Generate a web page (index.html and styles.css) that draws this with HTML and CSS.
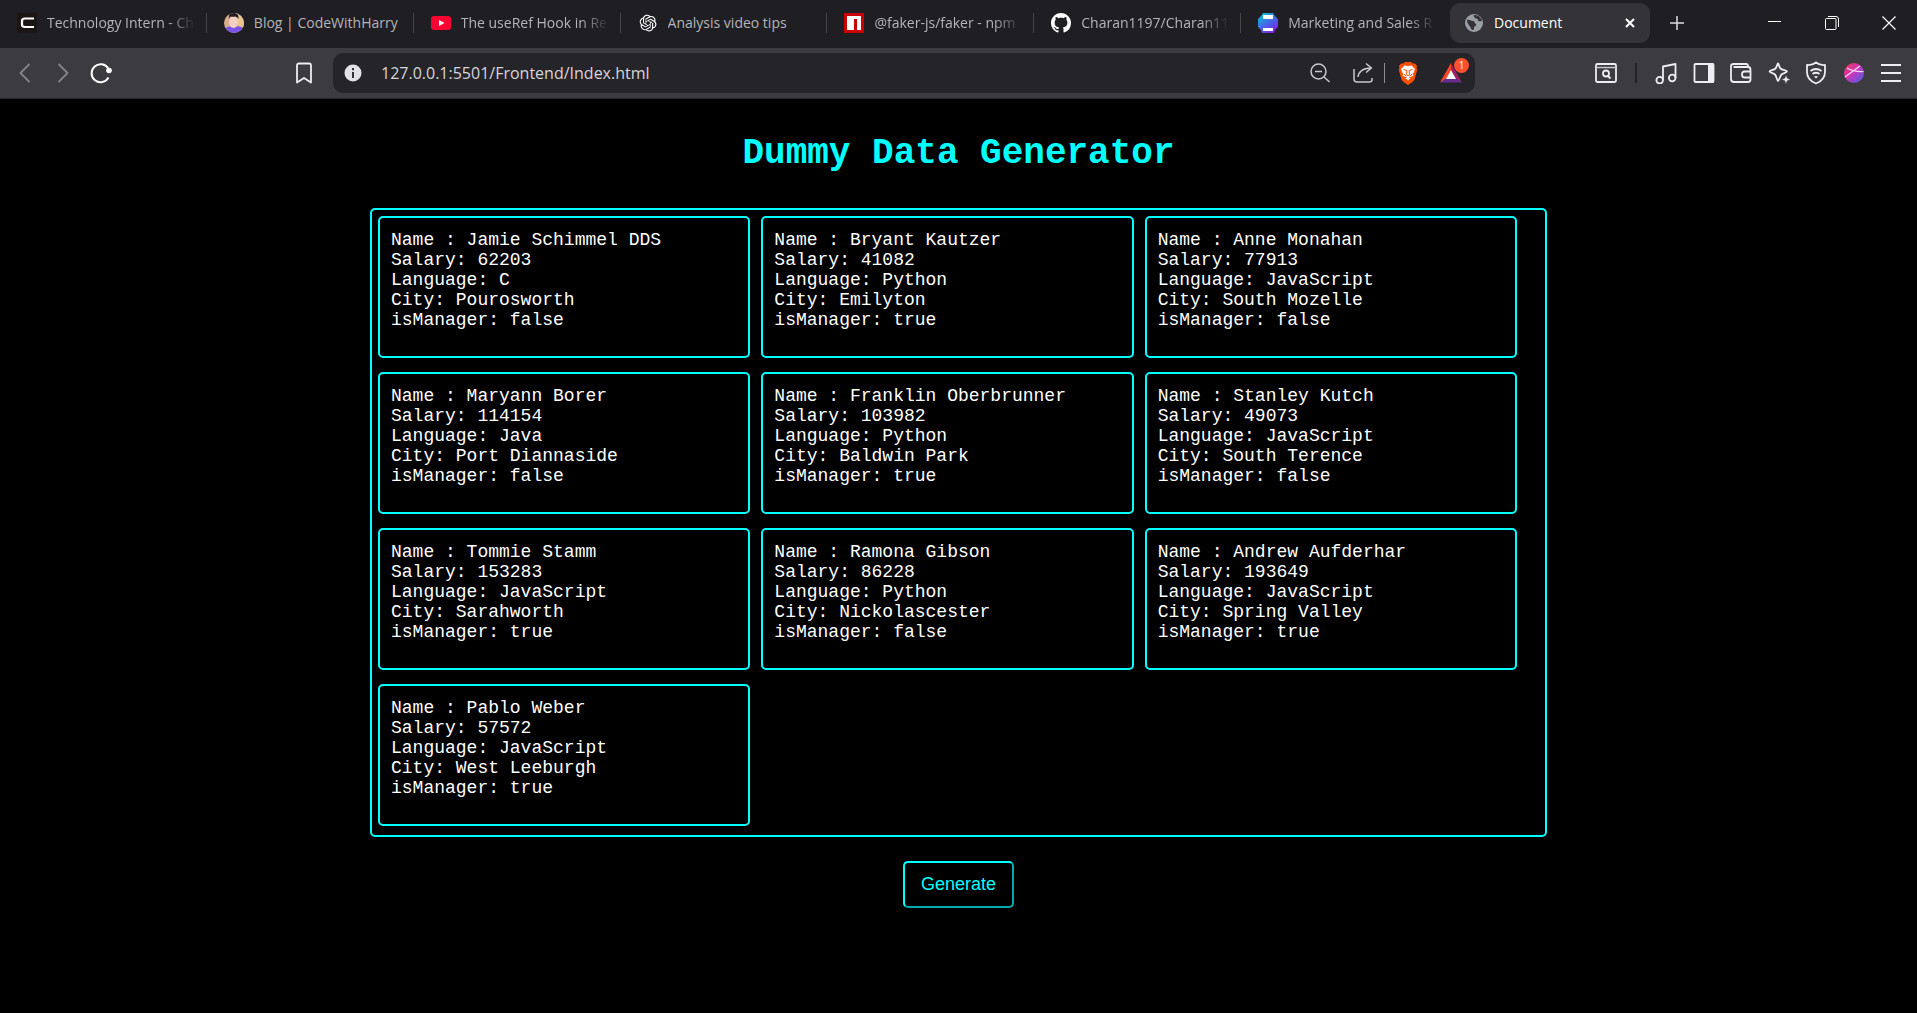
FILE: index.html
```html
<!DOCTYPE html>
<html lang="en">
<head>
<meta charset="utf-8">
<title>Document</title>
<link rel="stylesheet" href="styles.css">
</head>
<body>
<header class="browser">
  <div class="tabstrip">
    <nav class="tabs" aria-label="Tabs">
      <a class="tab" href="#"><svg class="fav" viewBox="0 0 20 20"><rect width="20" height="20" fill="#1b1514"/><path d="M17 5.500H8Q5 5.500 5 8v3.500Q5 14 8 14h9" fill="none" stroke="#fff" stroke-width="2.200"/></svg><span class="tab-title fade">Technology Intern - Ch</span></a>
      <a class="tab" href="#"><svg class="fav" viewBox="0 0 20 20"><defs><clipPath id="av"><circle cx="10" cy="10" r="10"/></clipPath></defs><g clip-path="url(#av)"><rect width="20" height="20" fill="#d9ad8d"/><path d="M12 0h8v14h-6z" fill="#e9c58f"/><path d="M0 20v-4q5-4 10-2 6-2 9 1v5z" fill="#7b55e8"/><ellipse cx="9.500" cy="9" rx="4.500" ry="6" fill="#f2cfc0"/><path d="M5 6Q4-1 10 0q5 0 4.500 6-1-2-3-2.500Q8 4 6.500 3.500 5.500 4 5 6z" fill="#241a20"/></g></svg><span class="tab-title">Blog | CodeWithHarry</span></a>
      <a class="tab" href="#"><svg class="fav" viewBox="0 0 20 20"><rect y="3" width="20" height="14" rx="3" fill="#ff0033"/><path d="M8 7l5.500 3L8 13z" fill="#fff"/></svg><span class="tab-title fade">The useRef Hook in Re</span></a>
      <a class="tab" href="#"><svg class="fav" viewBox="0 0 24 24"><path transform="translate(2 2) scale(.84)" fill="#fff" d="M22.282 9.821a5.985 5.985 0 0 0-.516-4.910 6.046 6.046 0 0 0-6.510-2.900A6.065 6.065 0 0 0 4.981 4.182a5.985 5.985 0 0 0-3.998 2.900 6.046 6.046 0 0 0 .743 7.097 5.980 5.980 0 0 0 .510 4.911 6.051 6.051 0 0 0 6.515 2.900A5.985 5.985 0 0 0 13.260 24a6.056 6.056 0 0 0 5.772-4.206 5.990 5.990 0 0 0 3.998-2.900 6.056 6.056 0 0 0-.748-7.073zM13.260 22.430a4.476 4.476 0 0 1-2.876-1.040l.141-.081 4.779-2.758a.795.795 0 0 0 .393-.681v-6.737l2.020 1.169a.071.071 0 0 1 .038.052v5.583a4.504 4.504 0 0 1-4.495 4.493zM3.600 18.304a4.471 4.471 0 0 1-.535-3.014l.142.085 4.783 2.759a.771.771 0 0 0 .781 0l5.843-3.369v2.332a.080.080 0 0 1-.033.062L9.740 19.950a4.500 4.500 0 0 1-6.140-1.646zM2.341 7.896a4.485 4.485 0 0 1 2.366-1.973V11.600a.766.766 0 0 0 .388.677l5.814 3.354-2.020 1.169a.076.076 0 0 1-.071 0l-4.830-2.787A4.504 4.504 0 0 1 2.341 7.872zm16.596 3.856l-5.833-3.388L15.119 7.200a.076.076 0 0 1 .071 0l4.830 2.791a4.494 4.494 0 0 1-.676 8.105v-5.678a.790.790 0 0 0-.407-.667zm2.011-3.024l-.142-.085-4.773-2.782a.776.776 0 0 0-.785 0L9.409 9.230V6.897a.066.066 0 0 1 .028-.061l4.830-2.787a4.500 4.500 0 0 1 6.680 4.660zM8.307 12.863l-2.020-1.164a.080.080 0 0 1-.038-.057V6.075a4.500 4.500 0 0 1 7.375-3.453l-.142.080L8.704 5.460a.795.795 0 0 0-.393.681zm1.097-2.365l2.602-1.500 2.607 1.500v2.999l-2.597 1.500-2.607-1.500z"/></svg><span class="tab-title">Analysis video tips</span></a>
      <a class="tab" href="#"><svg class="fav" viewBox="0 0 20 20"><rect width="20" height="20" fill="#cb0000"/><path d="M3 3h14v14h-4V6h-3v11H3z" fill="#fff"/></svg><span class="tab-title fade">@faker-js/faker - npm</span></a>
      <a class="tab" href="#"><svg class="fav" viewBox="0 0 16 16"><path fill="#fff" d="M8 0C3.580 0 0 3.580 0 8c0 3.540 2.290 6.530 5.470 7.590.400.070.550-.170.550-.380 0-.190-.010-.820-.010-1.490-2.010.370-2.530-.490-2.690-.940-.090-.230-.480-.940-.820-1.130-.280-.150-.680-.520-.010-.530.630-.010 1.080.580 1.230.820.720 1.210 1.870.870 2.330.660.070-.520.280-.870.510-1.070-1.780-.200-3.640-.890-3.640-3.950 0-.870.310-1.590.820-2.150-.080-.200-.360-1.020.080-2.120 0 0 .670-.210 2.200.820.640-.180 1.320-.270 2-.270s1.360.090 2 .270c1.530-1.040 2.200-.820 2.200-.820.440 1.100.160 1.920.080 2.120.510.560.820 1.270.820 2.150 0 3.070-1.870 3.750-3.650 3.950.290.250.540.730.540 1.480 0 1.070-.010 1.930-.010 2.200 0 .210.150.460.550.380A8.010 8.010 0 0 0 16 8c0-4.420-3.580-8-8-8z"/></svg><span class="tab-title fade">Charan1197/Charan11</span></a>
      <a class="tab" href="#"><svg class="fav" viewBox="0 0 20 20"><defs><linearGradient id="mk" x1="0" y1="0" x2=".7" y2="1"><stop offset="0" stop-color="#00d0c8"/><stop offset=".5" stop-color="#3b74e8"/><stop offset="1" stop-color="#7d1fe8"/></linearGradient></defs><path d="M5 0h10l2 3 3 3v8l-3 3-1 3H4l-1-3-3-3V6l3-3z" fill="url(#mk)"/><path d="M5 2h10v4H5zM5 15h10v3H5z" fill="#fff"/></svg><span class="tab-title fade">Marketing and Sales R</span></a>
      <a class="tab active" href="#" aria-current="page"><svg class="fav" viewBox="0 0 20 20"><circle cx="10" cy="10" r="9" fill="#9aa0a6"/><path d="M3 7c3-1 4 1 6 1s1 2 3 3c1 2-2 2-2 4s-1 3-3 1c0-3-4-4-4-9zM10 2c-1 2 1 2 1 3 1 1 3 0 3 2s2 1 4 1c-1-4-4-6-8-6z" fill="#343338"/></svg><span class="tab-title">Document</span><span class="tab-close"><svg width="12" height="12" viewBox="0 0 12 12"><path d="M2 2l8 8M10 2l-8 8" stroke="#fff" stroke-width="2"/></svg></span></a>
    </nav>
    <button class="icon-btn" aria-label="New tab"><svg width="16" height="16" viewBox="0 0 16 16"><path d="M8 1v14M1 8h14" stroke="#ddd" stroke-width="1.500"/></svg></button>
    <div class="window-controls">
      <button class="win-btn" aria-label="Minimize"><svg width="14" height="14" viewBox="0 0 14 14"><path d="M0 5.500h13" stroke="#fff"/></svg></button>
      <button class="win-btn" aria-label="Restore"><svg width="14" height="14" viewBox="0 0 14 14"><path d="M3 .5h8Q13.500.5 13.500 3v8" fill="none" stroke="#fff"/><rect x=".5" y="2.500" width="10.500" height="11" rx="1" fill="none" stroke="#fff"/></svg></button>
      <button class="win-btn" aria-label="Close"><svg width="14" height="14" viewBox="0 0 14 14"><path d="M.5.5l13 13M13.500.5l-13 13" stroke="#fff" stroke-width="1.200"/></svg></button>
    </div>
  </div>
  <div class="toolbar">
    <div class="nav-group">
      <button class="nav-btn" aria-label="Back"><svg width="20" height="20" viewBox="0 0 20 20"><path d="M14.500 1L5.500 10l9 9" class="ln dim"/></svg></button>
      <button class="nav-btn" aria-label="Forward"><svg width="20" height="20" viewBox="0 0 20 20"><path d="M5.500 1l9 9-9 9" class="ln dim"/></svg></button>
      <button class="nav-btn" aria-label="Reload"><svg width="22" height="22" viewBox="0 0 22 22"><path d="M18.300 6.500A9 9 0 1 0 18.500 15.500" class="ln bold"/><circle cx="19" cy="8.500" r="2.800" fill="#fff"/></svg></button>
      <button class="icon-btn bookmark" aria-label="Bookmark"><svg width="22" height="22" viewBox="0 0 22 22"><path d="M4 20.500V3.500q0-2 2-2h10q2 0 2 2v17L11 16z" class="ln"/></svg></button>
    </div>
    <div class="address">
      <svg class="info" width="18" height="18" viewBox="0 0 18 18"><circle cx="9" cy="9" r="8.500" fill="#e3e2e9"/><path d="M9 8v6M9 4v2.200" stroke="#333" stroke-width="2"/></svg>
      <input class="url" type="text" aria-label="Address" value="127.0.0.1:5501/Frontend/Index.html">
      <button class="icon-btn" aria-label="Zoom"><svg width="22" height="22" viewBox="0 0 22 22"><circle cx="9.500" cy="9.500" r="7.500" class="ln thin"/><path d="M15 15l5.500 5M6 9.500h7" class="ln thin"/></svg></button>
      <button class="icon-btn" aria-label="Share"><svg width="22" height="22" viewBox="0 0 22 22"><path d="M2 7v10q0 3 3 3h12q3 0 3-2v-2M6 15q1-8.500 13-9M14 1.500l5.500 4.500-5.500 4.500" class="ln thin"/></svg></button>
      <span class="sep light"></span>
      <button class="icon-btn" aria-label="Brave Shields"><svg width="20" height="23" viewBox="0 0 20 23"><path d="M5.500 1.500L7 0h6l1.500 1.500L17 1.500 19 4l-.5 2 .8 1.500-2.800 10Q16 19 10 23 4 19 3.500 17.500L.7 7.500 1.500 6 1 4l2-2.500z" fill="#ff5000"/><path d="M6.500 3.500L10 4l3.500-.5L17 7l-2 5 .3 2-3.300 1-2 .6-2-.6-3.300-1 .3-2-2-5zM7.500 16l2.500-1 2.500 1-2.500 2.500z" fill="#fff"/><path d="M5.500 7.500L9 8.500 8.500 12l1.500 2 1.500-2-.5-3.500 3.500-1M5.500 12l3 2M14.500 12l-3 2" fill="none" stroke="#ff5000" stroke-width="1"/></svg></button>
      <button class="icon-btn rewards" aria-label="Brave Rewards"><svg width="22" height="20" viewBox="0 0 22 20"><path d="M11 0L0 19.500 6.500 16 11 7z" fill="#ff4724"/><path d="M11 0l11 19.500L15.500 16 11 7z" fill="#9e1f63"/><path d="M0 19.500h22L15.500 15h-9z" fill="#662d91"/><path d="M11 7l5 9H6z" fill="#fff"/></svg><span class="badge">1</span></button>
    </div>
    <div class="ext-group">
      <button class="icon-btn" aria-label="Find in page"><svg width="22" height="22" viewBox="0 0 22 22"><rect x="1" y="2" width="20" height="18" rx="1.500" class="ln"/><path d="M1 5.500h20" class="ln thin"/><circle cx="11" cy="11.500" r="3" class="ln"/><path d="M13 14l2.500 2.500" class="ln"/></svg></button>
      <span class="sep dark"></span>
      <div class="ext-icons">
        <button class="icon-btn" aria-label="Playlist"><svg width="22" height="22" viewBox="0 0 22 22"><path d="M8 18V4.500L20.500 2v14" class="ln"/><circle cx="4.700" cy="18.200" r="3.300" class="ln"/><circle cx="17.200" cy="16" r="3.300" class="ln"/></svg></button>
        <button class="icon-btn" aria-label="Sidebar"><svg width="22" height="22" viewBox="0 0 22 22"><rect x="1.500" y="2" width="19" height="18" rx="1" class="ln"/><path d="M15 1.500h6v19h-6z" fill="#eee"/></svg></button>
        <button class="icon-btn" aria-label="Wallet"><svg width="22" height="22" viewBox="0 0 22 22"><path d="M18 5V4q0-2-2-2H3.500Q1 2 1 4v13q0 3 3 3h14q2.500 0 2.500-2.500v-10Q20.500 5 18 5H3.500M20.500 9.500h-6q-2.500 0-2.500 3t2.500 3h6" class="ln"/></svg></button>
        <button class="icon-btn" aria-label="Leo AI"><svg width="22" height="22" viewBox="0 0 22 22"><path d="M10 1.500c.8 0 1 3.500 2.500 5s6.500 2 6.500 3-4 1.500-5.500 3-2.500 6.500-3.500 6.500-1.500-5-3-6.500-5.500-2-5.500-3 4.500-1.500 6-3S9.200 1.500 10 1.500z" class="ln"/><path d="M18 13l1.300 3.200 3.200 1.300-3.200 1.300L18 22l-1.300-3.200-3.200-1.300 3.200-1.300z" fill="#eee" stroke="#3c3b40" stroke-width=".5"/></svg></button>
        <button class="icon-btn" aria-label="VPN"><svg width="22" height="24" viewBox="0 0 22 24"><path d="M11 1.500q4 3 9 2.500v7q0 8-9 11.500Q2 19 2 11V4q5 .5 9-2.500zM5.500 10q5.500-4 11 0M7.500 13q3.500-2.500 7 0" class="ln"/><path d="M9 15.500q2-1 4 0l-2 2z" fill="#eee"/></svg></button>
        <button class="icon-btn" aria-label="Profile"><svg width="20" height="20" viewBox="0 0 20 20"><defs><linearGradient id="pf" x1="0" y1="0" x2="1" y2="1"><stop offset="0" stop-color="#f0384f"/><stop offset=".45" stop-color="#d035b5"/><stop offset="1" stop-color="#3a62ef"/></linearGradient></defs><circle cx="10" cy="10" r="10" fill="url(#pf)"/><path d="M1 14L16 3M3 5Q9 9 19.500 8.500" fill="none" stroke="#fbd5f0" stroke-width="1.200"/></svg></button>
        <button class="icon-btn" aria-label="Menu"><svg width="22" height="22" viewBox="0 0 22 22"><path d="M1 3h20M1 11h20M1 19h20" class="ln"/></svg></button>
      </div>
    </div>
  </div>
</header>
<main class="page">
  <h1 class="title">Dummy Data Generator</h1>
  <section class="container">
    <article class="card">Name : Jamie Schimmel DDS<br>Salary: 62203<br>Language: C<br>City: Pourosworth<br>isManager: false</article>
    <article class="card">Name : Bryant Kautzer<br>Salary: 41082<br>Language: Python<br>City: Emilyton<br>isManager: true</article>
    <article class="card">Name : Anne Monahan<br>Salary: 77913<br>Language: JavaScript<br>City: South Mozelle<br>isManager: false</article>
    <article class="card">Name : Maryann Borer<br>Salary: 114154<br>Language: Java<br>City: Port Diannaside<br>isManager: false</article>
    <article class="card">Name : Franklin Oberbrunner<br>Salary: 103982<br>Language: Python<br>City: Baldwin Park<br>isManager: true</article>
    <article class="card">Name : Stanley Kutch<br>Salary: 49073<br>Language: JavaScript<br>City: South Terence<br>isManager: false</article>
    <article class="card">Name : Tommie Stamm<br>Salary: 153283<br>Language: JavaScript<br>City: Sarahworth<br>isManager: true</article>
    <article class="card">Name : Ramona Gibson<br>Salary: 86228<br>Language: Python<br>City: Nickolascester<br>isManager: false</article>
    <article class="card">Name : Andrew Aufderhar<br>Salary: 193649<br>Language: JavaScript<br>City: Spring Valley<br>isManager: true</article>
    <article class="card">Name : Pablo Weber<br>Salary: 57572<br>Language: JavaScript<br>City: West Leeburgh<br>isManager: true</article>
  </section>
  <button class="generate">Generate</button>
</main>
</body>
</html>
```
FILE: styles.css
```css
* { box-sizing: border-box; }
body { margin: 0; background: #000; color: #fff; }
button { font: inherit; color: inherit; background: none; border: 0; padding: 0; }

.browser { font-family: "Open Sans", "Noto Sans", sans-serif; }

/* Tab strip */
.tabstrip { display: flex; align-items: center; height: 48px; padding-bottom: 2px; background: #1f1e23; }
.tabs { display: flex; flex: 0 1 1652px; min-width: 0; }
.tab {
  display: flex; flex: 1 1 0; align-items: center; gap: 10px; min-width: 0;
  height: 40px; padding: 0 8px 0 17px;
  color: #b5b4b8; font-size: 14px; text-decoration: none;
  background: linear-gradient(#46454b, #46454b) right center / 1px 20px no-repeat;
}
.tab:nth-last-child(2) { background: none; }
.fav { flex: none; width: 20px; height: 20px; }
.tab-title { flex: 1; overflow: hidden; white-space: nowrap; line-height: 20px; }
.fade { -webkit-mask-image: linear-gradient(to right, #000 120px, transparent 148px); mask-image: linear-gradient(to right, #000 120px, transparent 148px); }
.tab.active { flex: 0 1 200px; margin: 0 2px; padding: 0 14px; background: #343338; border-radius: 10px; color: #fff; }
.tab-close { display: flex; }
.icon-btn { display: flex; flex: none; align-items: center; justify-content: center; width: 30px; height: 30px; }
.tabstrip > .icon-btn { margin-left: 10px; }
.window-controls { display: flex; margin-left: auto; }
.win-btn { display: flex; align-items: center; justify-content: center; width: 57px; height: 40px; }

/* Toolbar */
.toolbar { display: flex; align-items: center; height: 51px; background: #3c3b40; border-bottom: 1px solid #27262b; }
.nav-group { display: flex; flex: none; align-items: center; width: 333px; padding: 0 14px 0 6px; }
.nav-btn { display: flex; align-items: center; justify-content: center; width: 38px; height: 30px; }
.bookmark { margin-left: auto; }
.address { display: flex; flex: 1; align-items: center; height: 40px; min-width: 0; padding: 0 9px 0 11px; background: #252429; border-radius: 10px; }
.info { flex: none; }
.url { flex: 1; min-width: 0; margin: 0 0 0 19px; padding: 0; border: 0; outline: 0; background: none; color: #d5d5da; font: 16px/24px "Open Sans", "Noto Sans", sans-serif; }
.address .icon-btn + .icon-btn { margin-left: 13px; }
.sep { flex: none; height: 20px; }
.sep.light { width: 1px; margin: 0 8px 0 6px; background: #8b8a90; }
.sep.dark { width: 2px; background: #222126; }
.rewards { position: relative; }
.badge { position: absolute; top: 0; right: -3px; width: 15px; height: 15px; border-radius: 8px; background: #ff5130; font-size: 10px; line-height: 15px; text-align: center; }
.ext-group { display: flex; flex: none; align-items: center; justify-content: flex-end; gap: 14px; width: 442px; padding-right: 11px; }
.ext-icons { display: flex; justify-content: space-between; width: 255px; }
.ln { fill: none; stroke: #eeedf2; stroke-width: 1.8; stroke-linejoin: round; }
.ln.dim { stroke: #858489; }
.ln.thin { stroke: #c8c7cc; stroke-width: 1.5; }
.ln.bold { stroke: #fff; stroke-width: 2; }

/* Page */
.page { display: flex; flex-direction: column; align-items: center; padding: 35px 8px 32px; font: 18px/20px "Liberation Mono", "Courier New", monospace; }
.title { margin: 0 0 34px; color: cyan; font-size: 36px; line-height: 40px; }
.container {
  display: grid; grid-template-columns: repeat(3, 1fr); gap: 14px 11px;
  width: 1177px; max-width: 100%; padding: 6px 28px 9px 6px;
  border: 2px solid cyan; border-radius: 5px;
}
.card { padding: 12px 11px 26px; border: 2px solid cyan; border-radius: 5px; }
.generate {
  margin-top: 24px; padding: 11px 16px;
  border: 2px outset cyan; border-radius: 5px;
  color: cyan; font: 18px/21px "Liberation Sans", Arial, sans-serif;
}
```
